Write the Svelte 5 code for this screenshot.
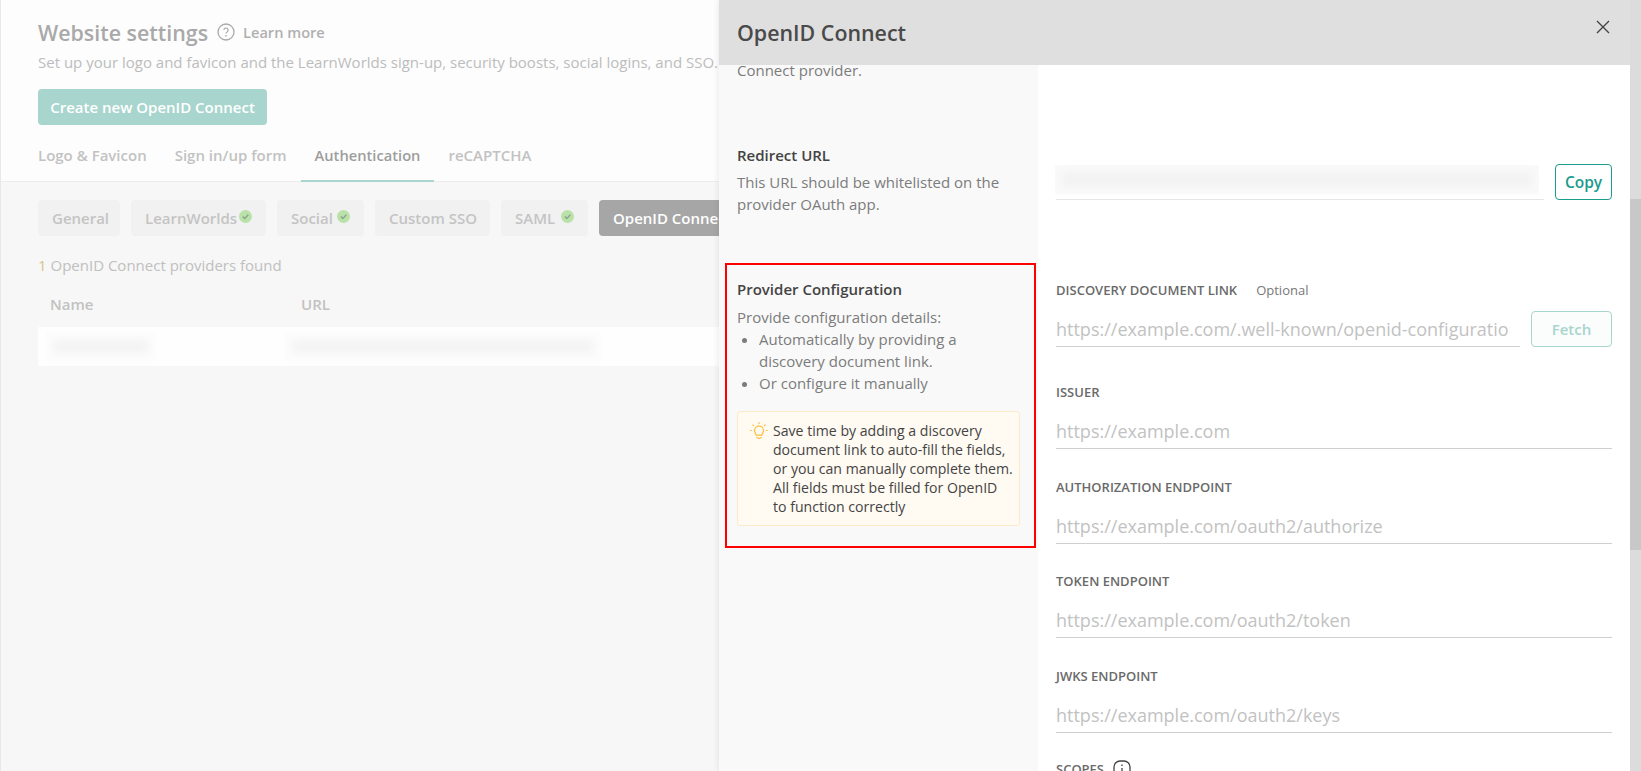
<script>
  const tabs = [
    { label: 'Logo & Favicon' },
    { label: 'Sign in/up form' },
    { label: 'Authentication', active: true },
    { label: 'reCAPTCHA' }
  ];
  const pills = [
    { label: 'General', w: 82 },
    { label: 'LearnWorlds', w: 135, check: true },
    { label: 'Social', w: 87, check: true },
    { label: 'Custom SSO', w: 115 },
    { label: 'SAML', w: 87, check: true },
    { label: 'OpenID Connect', w: 150, active: true }
  ];
  const fields = [
    { label: 'ISSUER', ph: 'https://example.com' },
    { label: 'AUTHORIZATION ENDPOINT', ph: 'https://example.com/oauth2/authorize' },
    { label: 'TOKEN ENDPOINT', ph: 'https://example.com/oauth2/token' },
    { label: 'JWKS ENDPOINT', ph: 'https://example.com/oauth2/keys' }
  ];
</script>

<div class="page">
  <header class="top">
    <div class="title-row">
      <h1>Website settings</h1>
      <svg class="help" viewBox="0 0 18 18" width="18" height="18" aria-hidden="true">
        <circle cx="9" cy="9" r="8" fill="none" stroke="#a8a8a8" stroke-width="1.3" />
        <path d="M6.9 7.1a2.1 2.1 0 1 1 3.2 1.8c-.7.4-1.1.8-1.1 1.6" fill="none" stroke="#a8a8a8" stroke-width="1.2" />
        <circle cx="9" cy="12.9" r=".8" fill="#a8a8a8" />
      </svg>
      <span class="learn">Learn more</span>
    </div>
    <p class="sub">Set up your logo and favicon and the LearnWorlds sign-up, security boosts, social logins, and SSO.</p>
    <button class="create">Create new OpenID Connect</button>
    <nav class="tabs">
      {#each tabs as t}
        <span class="tab" class:active={t.active}>{t.label}</span>
      {/each}
    </nav>
  </header>

  <section class="content">
    <div class="pills">
      {#each pills as p}
        <span class="pill" class:active={p.active} style="width: {p.w}px">
          {p.label}
          {#if p.check}
            <svg class="check" viewBox="0 0 13 13" width="13" height="13" aria-hidden="true">
              <circle cx="6.5" cy="6.5" r="6.5" fill="#b9e2a8" />
              <path d="M3.8 6.6l2 2 3.5-3.8" fill="none" stroke="#8f9f8c" stroke-width="1.4" />
            </svg>
          {/if}
        </span>
      {/each}
    </div>
    <p class="found"><span class="num">1</span> OpenID Connect providers found</p>
    <div class="thead"><span class="c1">Name</span><span>URL</span></div>
    <div class="row">
      <div class="c1"><i class="smear s1"></i></div>
      <i class="smear s2"></i>
    </div>
  </section>
</div>

<aside class="modal">
  <div class="modal-head">
    <h2>OpenID Connect</h2>
    <svg class="close" viewBox="0 0 14 14" width="14" height="14" aria-hidden="true">
      <path d="M1 1l12 12M13 1L1 13" stroke="#444" stroke-width="1.4" fill="none" />
    </svg>
  </div>
  <div class="modal-body">
    <div class="side">
      <p class="desc cut">Connect provider.</p>
      <div class="block redirect">
        <h3>Redirect URL</h3>
        <p class="desc">This URL should be whitelisted on the provider OAuth app.</p>
      </div>
      <div class="block config">
        <h3>Provider Configuration</h3>
        <p class="desc">Provide configuration details:</p>
        <ul>
          <li>Automatically by providing a discovery document link.</li>
          <li>Or configure it manually</li>
        </ul>
        <div class="tip">
          <svg class="bulb" viewBox="0 0 18 18" width="18" height="18" aria-hidden="true">
            <g fill="none" stroke="#fbbf3f" stroke-width="1.2" stroke-linecap="round">
              <path d="M6.2 13.2c0-1.6-1.7-2.3-1.7-4.6a4.5 4.5 0 0 1 9 0c0 2.3-1.7 3-1.7 4.6z" />
              <path d="M6.8 15.4c.4 1.2 4 1.2 4.4 0" />
              <path d="M9 .7v1M2.9 2.9l.7.7M15.1 2.9l-.7.7M.7 8.5h1M16.3 8.5h1" />
            </g>
          </svg>
          <p>Save time by adding a discovery<br />document link to auto-fill the fields,<br />or you can manually complete them.<br />All fields must be filled for OpenID<br />to function correctly</p>
        </div>
        <div class="mark"></div>
      </div>
    </div>

    <div class="form">
      <div class="url-row">
        <div class="url-field"><i class="smear s3"></i></div>
        <button class="outline">Copy</button>
      </div>

      <div class="label-row discovery"><label for="d">DISCOVERY DOCUMENT LINK</label><span class="opt">Optional</span></div>
      <div class="fetch-row">
        <div class="input grow"><input id="d" placeholder="https://example.com/.well-known/openid-configuration" /></div>
        <button class="outline faint">Fetch</button>
      </div>

      {#each fields as f, i}
        <div class="label-row" class:first={i === 0}><span class="lab">{f.label}</span></div>
        <div class="input"><input placeholder={f.ph} /></div>
      {/each}

      <div class="label-row scopes"><span class="lab">SCOPES</span>
        <svg viewBox="0 0 18 18" width="18" height="18" aria-hidden="true">
          <rect x="1" y="1" width="16" height="16" rx="6" fill="none" stroke="#444" stroke-width="1.3" />
          <path d="M9 8v5M9 4.6V6" stroke="#444" stroke-width="1.3" />
        </svg>
      </div>
    </div>
  </div>
</aside>

<div class="scrollbar"><div class="thumb"></div></div>

<style>
  :global(body) {
    margin: 0;
    overflow: hidden;
    background: #f7f7f7;
    font-family: "Open Sans", "Noto Sans", sans-serif;
  }
  .page {
    height: 771px;
    display: flex;
    flex-direction: column;
    border-left: 1px solid #e8e8e8;
    box-sizing: border-box;
  }
  .top {
    background: #fdfdfd;
    padding: 17px 0 0 37px;
    border-bottom: 1px solid #ececec;
  }
  .title-row {
    display: flex;
    align-items: center;
    height: 30px;
  }
  h1 {
    margin: 0;
    font-size: 21.4px;
    font-weight: 600;
    color: #a9a9a9;
    white-space: nowrap;
  }
  .help { margin-left: 9px; }
  .learn {
    margin-left: 8px;
    font-size: 14.6px;
    font-weight: 600;
    color: #b0b0b0;
  }
  .sub {
    margin: 4px 0 0;
    font-size: 15px;
    line-height: 22px;
    color: #bcbcbc;
    white-space: nowrap;
  }
  .create {
    display: block;
    margin-top: 16px;
    width: 229px;
    height: 36px;
    padding: 0;
    border: 0;
    border-radius: 4px;
    background: #a8d5cd;
    color: #fff;
    font: 600 15px "Open Sans", sans-serif;
  }
  .tabs {
    display: flex;
    margin: 14px 0 -1px -14px;
  }
  .tab {
    padding: 0 14px;
    height: 43px;
    line-height: 32px;
    font-size: 15px;
    font-weight: 600;
    color: #c2c2c2;
    box-sizing: border-box;
    border-bottom: 2px solid transparent;
  }
  .tab.active {
    font-size: 14.7px;
    color: #9d9d9d;
    border-bottom-color: #a8d5cd;
  }
  .content {
    flex: 1;
    padding: 18px 0 0 37px;
    background: #f7f7f7;
  }
  .pills {
    display: flex;
    gap: 11px;
  }
  .pill {
    display: flex;
    flex: none;
    align-items: center;
    height: 36px;
    padding: 0 14px;
    box-sizing: border-box;
    border-radius: 4px;
    background: #f1f1f1;
    color: #c4c4c4;
    font-size: 15px;
    font-weight: 600;
    white-space: nowrap;
  }
  .pill.active {
    background: #a6a6a6;
    color: #fff;
  }
  .check { margin: -4px 0 0 auto; }
  .found {
    margin: 18px 0 0;
    font-size: 15px;
    line-height: 22px;
    color: #c0c0c0;
  }
  .num { color: #d9c28e; }
  .thead {
    display: flex;
    margin-top: 17px;
    padding-left: 12px;
    font-size: 15px;
    font-weight: 600;
    line-height: 22px;
    color: #c2c2c2;
  }
  .c1 { width: 251px; flex: none; }
  .row {
    display: flex;
    align-items: center;
    height: 39px;
    margin-top: 12px;
    padding-left: 12px;
    background: #fefefe;
  }
  .smear {
    display: block;
    height: 29px;
    background: #f3f3f3;
    box-shadow: inset 0 0 9px 8px #fcfcfc;
  }
  .s1 { width: 110px; margin-left: -4px; }
  .s2 { width: 316px; margin-left: -16px; }
  .s3 { width: 484px; margin: 1px 0 0 -1px; background: #f3f3f3; box-shadow: inset 0 0 8px 6px #fafafa; }

  .modal {
    position: absolute;
    top: 0;
    left: 719px;
    width: 911px;
    height: 771px;
    background: #fff;
    overflow: hidden;
    display: flex;
    flex-direction: column;
    box-shadow: -1px 0 6px rgba(0, 0, 0, .08);
  }
  .modal-head {
    flex: none;
    height: 65px;
    background: #dfdfdf;
    display: flex;
    align-items: center;
    justify-content: space-between;
    padding: 0 20px 0 18px;
    box-sizing: border-box;
  }
  h2 {
    margin: 0;
    font-size: 21.4px;
    font-weight: 600;
    color: #4a4a4a;
  }
  .close { margin-top: -12px; }
  .modal-body {
    flex: 1;
    display: flex;
    min-height: 0;
  }
  .side {
    flex: none;
    width: 319px;
    box-sizing: border-box;
    padding: 0 18px;
    background: #f9f9f9;
  }
  .desc {
    margin: 0;
    font-size: 15px;
    line-height: 22px;
    color: #7c7c7c;
  }
  .cut { margin-top: -6px; }
  h3 {
    margin: 0 0 5px;
    font-size: 15px;
    line-height: 22px;
    font-weight: 600;
    color: #444;
  }
  .redirect { margin-top: 63px; }
  .block.config {
    position: relative;
    margin-top: 63px;
  }
  .config h3 { margin-bottom: 6px; }
  ul {
    margin: 0;
    padding-left: 22px;
    font-size: 15px;
    line-height: 22px;
    color: #7c7c7c;
  }
  .tip {
    display: flex;
    align-items: flex-start;
    gap: 5px;
    margin-top: 17px;
    box-sizing: border-box;
    height: 115px;
    width: 283px;
    padding: 9px 0 0 12px;
    background: #fffaf2;
    border: 1px solid #fdeac8;
    border-radius: 3px;
  }
  .tip p {
    margin: 0;
    font-size: 14.1px;
    line-height: 19px;
    color: #444;
    white-space: nowrap;
  }
  .bulb { flex: none; margin-top: 1px; }
  .mark {
    position: absolute;
    left: -12px;
    right: -16px;
    top: -15px;
    height: 285px;
    box-sizing: border-box;
    border: 2px solid #f00;
    pointer-events: none;
  }
  .form {
    flex: 1;
    padding: 0 18px 0 18px;
    min-width: 0;
  }
  .url-row {
    display: flex;
    gap: 11px;
    margin-top: 99px;
    align-items: flex-end;
  }
  .url-field {
    flex: 1;
    height: 36px;
    border-bottom: 1px solid #e6e6e6;
    box-sizing: border-box;
    display: flex;
    align-items: flex-start;
  }
  .outline {
    flex: none;
    width: 57px;
    height: 36px;
    padding: 0;
    background: #fff;
    border: 1px solid #1a9c8e;
    border-radius: 4px;
    color: #1a9c8e;
    font: 600 15.5px "Open Sans", sans-serif;
  }
  .outline.faint {
    width: 81px;
    border-color: #a8d5cd;
    color: #a8d5cd;
    background: #fbfdfc;
    font-size: 15px;
  }
  .label-row {
    display: flex;
    align-items: center;
    gap: 9px;
    margin-top: 27.67px;
    height: 20px;
  }
  .label-row.first { margin-top: 35px; }
  .label-row.scopes { margin-top: 26px; }
  .discovery { margin-top: 80px; gap: 19px; }
  label, .lab {
    font-size: 13px;
    font-weight: 600;
    color: #6a6a6a;
    white-space: nowrap;
  }
  .opt { font-size: 13px; color: #777; }
  .fetch-row {
    display: flex;
    gap: 11px;
    margin-top: 11px;
  }
  .grow { flex: 1; }
  .input {
    height: 36px;
    margin-top: 11px;
    border-bottom: 1px solid #cfcfcf;
    box-sizing: border-box;
  }
  .fetch-row .input { margin-top: 0; padding-right: 10px; }
  input {
    width: 100%;
    height: 100%;
    padding: 1px 0 0;
    border: 0;
    outline: 0;
    background: transparent;
    font: 18px "Open Sans", sans-serif;
    box-sizing: border-box;
  }
  input::placeholder { color: #c2c2c2; opacity: 1; }

  .scrollbar {
    position: absolute;
    top: 0;
    left: 1630px;
    width: 11px;
    height: 771px;
    background: #dcdcdc;
  }
  .thumb {
    margin-top: 199px;
    height: 351px;
    background: #c8c8c8;
  }
</style>
